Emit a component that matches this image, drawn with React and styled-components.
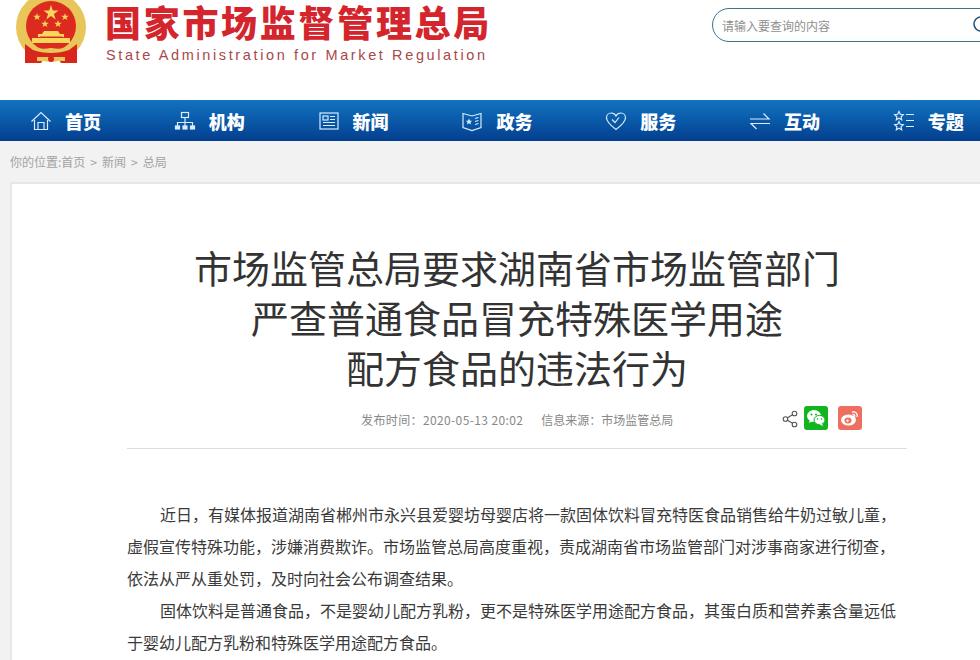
import styled, { createGlobalStyle } from "styled-components";

const GlobalStyle = createGlobalStyle`
    html, body {
        margin: 0;
        padding: 0;
        background: #f2f2f2;
        overflow: hidden;
    }
    body {
        font-family: "Noto Sans CJK SC", "Liberation Sans", sans-serif;
    }
`;

const Page = styled.div`
    width: 980px;
    height: 660px;
    overflow: hidden;
`;

const Header = styled.header`
    height: 100px;
    background: #fff;
    display: flex;
    align-items: flex-start;
    padding-left: 15px;
    overflow: hidden;
    box-sizing: border-box;
`;

const Brand = styled.div`
    flex: none;
    width: 390px;
    margin-left: 18px;
    display: flex;
    flex-direction: column;
`;

const BrandName = styled.div`
    font-size: 36px;
    line-height: 42px;
    font-weight: 900;
    color: #d4252c;
    letter-spacing: 2.7px;
    white-space: nowrap;
`;

const BrandEn = styled.div`
    font-family: "Liberation Sans", sans-serif;
    font-size: 14.5px;
    line-height: 20px;
    margin-top: 3px;
    margin-left: 1px;
    color: #a8484d;
    letter-spacing: 2.62px;
    white-space: nowrap;
`;

const Search = styled.div`
    flex: none;
    margin-left: 217px;
    margin-top: 8px;
    width: 320px;
    height: 34px;
    box-sizing: border-box;
    border: 1px solid #3f7195;
    border-radius: 17px;
    display: flex;
    align-items: center;
    padding-left: 9px;
    gap: 140px;
    font-size: 12px;
    color: #8f8f8f;
`;

const SearchText = styled.span`
    width: 110px;
    white-space: nowrap;
`;

const Nav = styled.nav`
    height: 41px;
    background: linear-gradient(#1372c0, #0a5cab 45%, #033f8e);
    display: flex;
    overflow: hidden;
`;

const NavItem = styled.a`
    flex: none;
    width: 143.8px;
    box-sizing: border-box;
    padding-left: 30px;
    display: flex;
    align-items: center;
    gap: 13px;
    color: #fff;
    font-size: 18px;
    font-weight: 900;
    white-space: nowrap;
`;

const Icon = styled.svg`
    width: 22px;
    height: 22px;
    flex: none;
    fill: none;
    stroke: #d8ecfb;
    stroke-width: 1.2;
`;

const Crumbs = styled.div`
    height: 41px;
    padding-left: 10px;
    display: flex;
    align-items: center;
    font-size: 12px;
    color: #a3a3a3;
    gap: 5px;
`;

const Card = styled.main`
    margin-left: 10px;
    margin-right: -20px;
    height: 500px;
    background: #fff;
    border: 1px solid #e6e6e6;
    border-width: 2px 0 0 2px;
    padding: 58px 0 0 115px;
    box-sizing: border-box;
`;

const Article = styled.article`
    width: 780px;
`;

const Title = styled.h1`
    margin: 0;
    text-align: center;
    font-size: 38px;
    line-height: 50px;
    font-weight: 400;
    color: #333;
`;

const Meta = styled.div`
    margin-top: 12px;
    height: 30px;
    padding-left: 234px;
    padding-bottom: 14px;
    border-bottom: 1px solid #ddd;
    display: flex;
    align-items: center;
    font-size: 12px;
    color: #888;
`;

const MetaText = styled.span`
    margin-right: ${(props) => props.$gap}px;
    letter-spacing: ${(props) => props.$spacing || 0}px;
    white-space: nowrap;
`;

const ShareIcon = styled.svg`
    width: 16px;
    height: 18px;
    margin-right: 6px;
    fill: none;
    stroke: #555;
    stroke-width: 1.1;
`;

const SocialBadge = styled.span`
    width: 24px;
    height: 24px;
    border-radius: 3px;
    background: ${(props) => props.$bg};
    margin-right: 10px;
    margin-bottom: 2px;
    display: flex;
    align-items: center;
    justify-content: center;
`;

const Body = styled.div`
    margin-top: 49px;
`;

const Para = styled.p`
    margin: 0;
    font-size: 16px;
    line-height: 32px;
    color: #3a3a3a;
    text-indent: 33px;
`;

function Emblem() {
    return (
        <svg width="72" height="68" viewBox="0 0 72 68" style={{ flex: "none" }}>
            <circle cx="36" cy="27" r="35" fill="#e9c65a" />
            <circle cx="36" cy="26" r="25" fill="#dc2a1e" />
            <g fill="#f5d75c">
                <path d="M36 5l1.800 5.500h5.800l-4.700 3.400 1.800 5.500-4.700-3.400-4.700 3.400 1.800-5.500-4.700-3.400h5.800z" />
                <path d="M22 13l.9 2.700h2.900l-2.300 1.700.9 2.700-2.400-1.700-2.400 1.700.9-2.700-2.300-1.700h2.900z" />
                <path d="M50 13l.9 2.700h2.900l-2.300 1.700.9 2.700-2.400-1.700-2.400 1.700.9-2.700-2.300-1.700h2.900z" />
                <path d="M30 20l.9 2.700h2.900l-2.300 1.700.9 2.700-2.400-1.700-2.400 1.700.9-2.700-2.300-1.700h2.900z" />
                <path d="M43 20l.9 2.700h2.900l-2.300 1.700.9 2.700-2.400-1.700-2.400 1.700.9-2.700-2.300-1.700h2.900z" />
                <path d="M29 31h14l2 3h4v3H23v-3h4z" />
                <rect x="17" y="38" width="38" height="5" />
            </g>
            <path d="M25 37h22" stroke="#dc2a1e" strokeWidth="1" />
            <path d="M14 45q8 8 22 5q14 3 22-5" stroke="#e9c65a" strokeWidth="4" fill="none" />
            <path d="M10 44l8 6q8 3 18 3t18-3l8-6v19H46l-3-5H29l-3 5H10z" fill="#d9261c" />
            <path d="M22 57h28v4H22z" fill="#e9c65a" />
            <circle cx="36" cy="59" r="3" fill="#d9261c" />
        </svg>
    );
}

const navItems = [
    {
        label: "首页",
        icon: (
            <>
                <path d="M1.500 11.500L11 2.500l9.500 9" />
                <path d="M4.500 10v9.500h13V10" />
                <path d="M8 19v-6.500h6V19" />
            </>
        ),
    },
    {
        label: "机构",
        icon: (
            <>
                <rect x="7.500" y="2.500" width="7" height="5" />
                <path d="M11 7.500v5M3.500 16v-3.500h15V16M11 12.500V16" />
                <rect x="1.500" y="16" width="4" height="3" fill="#d8ecfb" />
                <rect x="9" y="16" width="4" height="3" fill="#d8ecfb" />
                <rect x="16.500" y="16" width="4" height="3" fill="#d8ecfb" />
            </>
        ),
    },
    {
        label: "新闻",
        icon: (
            <>
                <rect x="2" y="3" width="18" height="16" />
                <rect x="5" y="6" width="5" height="4" />
                <path d="M12 6.500h5M12 9.500h5M5 12.500h12M5 15.500h12" />
            </>
        ),
    },
    {
        label: "政务",
        icon: (
            <>
                <path d="M2 3.500l9 2.500 9-2.500v14l-9 3-9-3z" />
                <path d="M14 8.500l3.500-1M14 11.500l3.500-1M14 14.500l3.500-1" />
                <path d="M8 8.500l1 2.200h2.200l-1.700 1.500.6 2.300-2.100-1.300-2.100 1.300.6-2.300-1.700-1.500H7z" fill="#d8ecfb" stroke="none" />
            </>
        ),
    },
    {
        label: "服务",
        icon: (
            <>
                <path d="M11 19.500C5 15 1.500 11.500 1.500 7.800 1.500 5 3.600 3 6.200 3 8.200 3 10 4 11 6c1-2 2.800-3 4.800-3 2.600 0 4.700 2 4.700 4.800 0 3.700-3.500 7.200-9.500 11.700z" />
                <path d="M7 9.500l3 3 4-5" />
            </>
        ),
    },
    {
        label: "互动",
        icon: (
            <>
                <path d="M1 9h19L14.500 3.500" />
                <path d="M21 13.500H2l5.500 5.500" />
            </>
        ),
    },
    {
        label: "专题",
        icon: (
            <>
                <path d="M6 1.500l1.300 2.800 3 .4-2.200 2.100.6 3L6 8.300 3.300 9.800l.6-3L1.700 4.700l3-.4z" />
                <path d="M6 11.500l1.300 2.800 3 .4-2.200 2.100.6 3L6 18.300l-2.700 1.500.6-3-2.200-2.100 3-.4z" />
                <path d="M13 4.500h8M13 10.500h8M13 16.500h8" />
            </>
        ),
    },
];

export default function App() {
    return (
        <Page>
            <GlobalStyle />
            <Header>
                <Emblem />
                <Brand>
                    <BrandName>国家市场监督管理总局</BrandName>
                    <BrandEn>State Administration for Market Regulation</BrandEn>
                </Brand>
                <Search>
                    <SearchText>请输入要查询的内容</SearchText>
                    <svg width="20" height="20" viewBox="0 0 20 20" fill="none" stroke="#1d4f73" strokeWidth="1.5">
                        <circle cx="9" cy="9" r="7" />
                    </svg>
                </Search>
            </Header>
            <Nav>
                {navItems.map((item) => (
                    <NavItem key={item.label}>
                        <Icon viewBox="0 0 22 22">{item.icon}</Icon>
                        {item.label}
                    </NavItem>
                ))}
            </Nav>
            <Crumbs>
                <span>你的位置:首页</span>
                <span>&gt;</span>
                <span>新闻</span>
                <span>&gt;</span>
                <span>总局</span>
            </Crumbs>
            <Card>
                <Article>
                    <Title>
                        市场监管总局要求湖南省市场监管部门
                        <br />
                        严查普通食品冒充特殊医学用途
                        <br />
                        配方食品的违法行为
                    </Title>
                    <Meta>
                        <MetaText $gap={18} $spacing={0.38}>发布时间：2020-05-13 20:02</MetaText>
                        <MetaText $gap={109}>信息来源：市场监管总局</MetaText>
                        <ShareIcon viewBox="0 0 16 18">
                            <circle cx="3.500" cy="9" r="2.300" />
                            <circle cx="12.500" cy="3.500" r="2.300" />
                            <circle cx="12.500" cy="14.500" r="2.300" />
                            <path d="M5.500 7.800l5-3M5.500 10.200l5 3" />
                        </ShareIcon>
                        <SocialBadge $bg="#12b51f">
                            <svg width="20" height="18" viewBox="0 0 20 18">
                                <ellipse cx="8" cy="7" rx="7" ry="6" fill="#fff" />
                                <path d="M4 11l-1 3 4-2z" fill="#fff" />
                                <ellipse cx="13.500" cy="11" rx="5.500" ry="4.600" fill="#fff" stroke="#12b51f" />
                                <path d="M16 14.500l1 2.500-3.500-1.500z" fill="#fff" />
                                <circle cx="5.500" cy="5.500" r="1" fill="#12b51f" />
                                <circle cx="10" cy="5.500" r="1" fill="#12b51f" />
                                <circle cx="11.500" cy="10" r=".8" fill="#12b51f" />
                                <circle cx="15.500" cy="10" r=".8" fill="#12b51f" />
                            </svg>
                        </SocialBadge>
                        <SocialBadge $bg="#ee6f5f">
                            <svg width="20" height="18" viewBox="0 0 20 18">
                                <ellipse cx="8.500" cy="11" rx="7.500" ry="5.500" fill="#fff" />
                                <ellipse cx="8" cy="11.500" rx="3.500" ry="3" fill="#ee6f5f" />
                                <circle cx="7.500" cy="11.800" r="1.200" fill="#fff" />
                                <path d="M12 3c3.500-.8 6 1.500 5 5M12.500 5.500c1.500-.3 2.600.8 2.200 2.200" fill="none" stroke="#fff" strokeWidth="1.300" />
                            </svg>
                        </SocialBadge>
                    </Meta>
                    <Body>
                        <Para>
                            近日，有媒体报道湖南省郴州市永兴县爱婴坊母婴店将一款固体饮料冒充特医食品销售给牛奶过敏儿童，虚假宣传特殊功能，涉嫌消费欺诈。市场监管总局高度重视，责成湖南省市场监管部门对涉事商家进行彻查，依法从严从重处罚，及时向社会公布调查结果。
                        </Para>
                        <Para>
                            固体饮料是普通食品，不是婴幼儿配方乳粉，更不是特殊医学用途配方食品，其蛋白质和营养素含量远低于婴幼儿配方乳粉和特殊医学用途配方食品。
                        </Para>
                    </Body>
                </Article>
            </Card>
        </Page>
    );
}
